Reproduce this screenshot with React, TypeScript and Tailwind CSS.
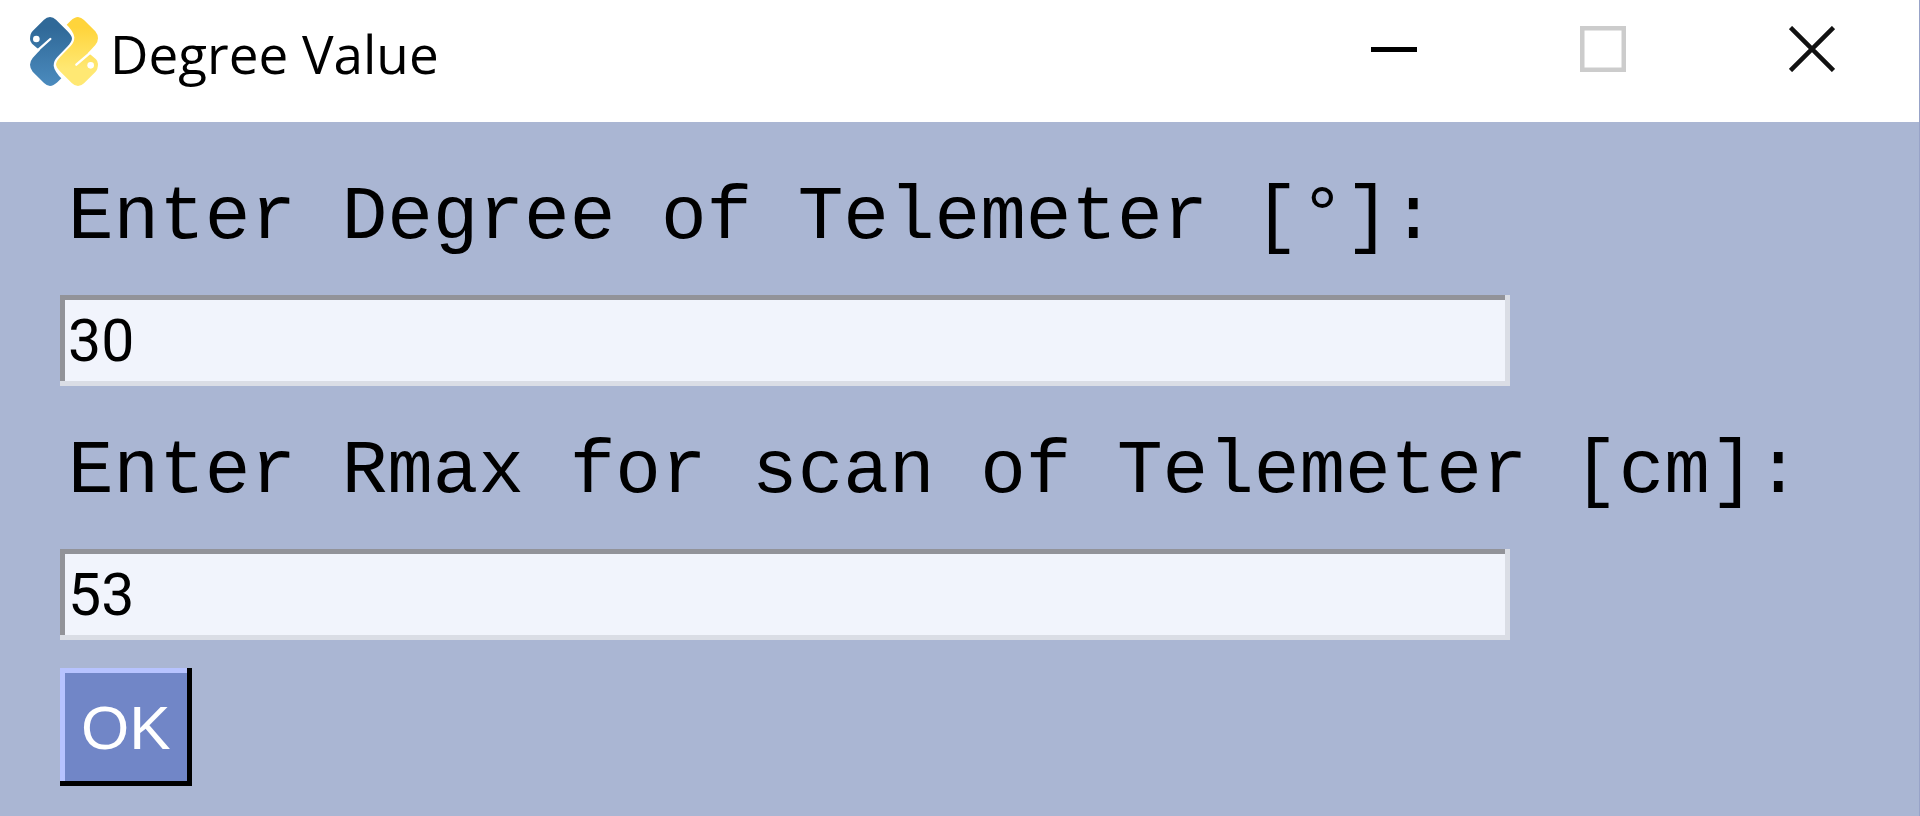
import { useState } from "react";

const SNAKE =
  "M60 0 Q70 0 78 8 L112 42 Q126 56 126 65 Q125 75 113 88 L82 120 Q71 131 71 146 Q72 156 79 166 Q86 177 94 184 L82 196 Q70 207 60 207 Q50 206 42 198 L8 164 Q0 154 0 143 Q0 133 8 123 L30 99 L21 93 L6 80 Q0 74 0 66 Q0 50 8 42 L42 8 Q50 0 60 0 Z";

function PythonLogo() {
  return (
    <svg viewBox="0 0 204 207" className="h-[69px] w-[68px] shrink-0" aria-hidden="true">
      <defs>
        <linearGradient id="snake-blue" x1="0" y1="0" x2="0" y2="1">
          <stop offset="0.15" stopColor="#306998" />
          <stop offset="1" stopColor="#4b8bbe" />
        </linearGradient>
        <linearGradient id="snake-yellow" x1="0" y1="1" x2="0" y2="0">
          <stop offset="0.15" stopColor="#ffd43b" />
          <stop offset="0.75" stopColor="#ffe873" />
        </linearGradient>
      </defs>
      <g>
        <path d={SNAKE} fill="url(#snake-blue)" />
        <path d="M61 66 L22 101" stroke="#fff" strokeWidth="7" strokeLinecap="round" />
        <circle cx="19" cy="66" r="10" fill="#fff" />
      </g>
      <g transform="rotate(180 102 103.5)">
        <path d={SNAKE} fill="url(#snake-yellow)" />
        <path d="M65 64 L22 101" stroke="#fff" strokeWidth="7" strokeLinecap="round" />
        <circle cx="22" cy="62" r="10" fill="#fff" />
      </g>
    </svg>
  );
}

const captionButton = "flex h-full w-[209px] items-center justify-center pb-6";

function TitleBar() {
  return (
    <header className="flex h-[122px] items-center justify-between bg-white">
      <div className="flex items-center gap-3 pb-5 pl-[30px]">
        <PythonLogo />
        <h1 className="pt-1.5 font-['Open_Sans',sans-serif] text-[53px] leading-[72px] text-black">
          Degree Value
        </h1>
      </div>
      <div className="flex h-full pr-[3px]">
        <button type="button" aria-label="Minimize" className={captionButton}>
          <svg viewBox="0 0 46 46" className="size-[46px]" fill="none" stroke="#000" strokeWidth="5">
            <path d="M0 23.500H46" />
          </svg>
        </button>
        <button type="button" aria-label="Maximize" disabled className={captionButton}>
          <svg viewBox="0 0 46 46" className="size-[46px]" fill="none" stroke="#cccccc" strokeWidth="4.500">
            <rect x="2.250" y="2.250" width="41.500" height="41.500" />
          </svg>
        </button>
        <button type="button" aria-label="Close" className={captionButton}>
          <svg viewBox="0 0 46 46" className="size-[46px]" fill="none" stroke="#111" strokeWidth="4.500">
            <path d="M1.500 1.500L44.500 44.500M44.500 1.500L1.500 44.500" />
          </svg>
        </button>
      </div>
    </header>
  );
}

interface FieldProps {
  id: string;
  label: string;
  value: string;
  onChange: (value: string) => void;
}

function Field({ id, label, value, onChange }: FieldProps) {
  return (
    <div className="flex flex-col gap-[34px]">
      <label
        htmlFor={id}
        className="whitespace-nowrap pl-2 font-['Liberation_Mono',monospace] text-[76px] leading-[86px] text-black"
      >
        {label}
      </label>
      <input
        id={id}
        type="text"
        value={value}
        onChange={(event) => onChange(event.target.value)}
        className="h-[91px] w-[78%] bg-[#f1f4fc] pl-2 font-['Roboto',sans-serif] text-[59px] leading-[82px] text-black shadow-[inset_-5px_-5px_0_#dadde5,inset_5px_5px_0_#929399] outline-none"
      />
    </div>
  );
}

export default function App() {
  const [degree, setDegree] = useState("30");
  const [rmax, setRmax] = useState("53");

  return (
    <div className="flex min-h-screen flex-col border-r border-[#98a3c8] bg-[#aab6d3]">
      <TitleBar />
      <form
        className="flex flex-col gap-[43px] pt-[53px] pr-0 pb-7 pl-[60px]"
        onSubmit={(event) => event.preventDefault()}
      >
        <Field id="degree" label="Enter Degree of Telemeter [°]:" value={degree} onChange={setDegree} />
        <div className="flex flex-col items-stretch gap-[28px]">
          <Field id="rmax" label="Enter Rmax for scan of Telemeter [cm]:" value={rmax} onChange={setRmax} />
          <button
            type="submit"
            className="h-[118px] self-start bg-[#7186c7] px-[21px] font-['Liberation_Sans',sans-serif] text-[62px] leading-[69px] text-white shadow-[inset_-5px_-5px_0_#000,inset_5px_5px_0_#b7c3ff]"
          >
            OK
          </button>
        </div>
      </form>
    </div>
  );
}
